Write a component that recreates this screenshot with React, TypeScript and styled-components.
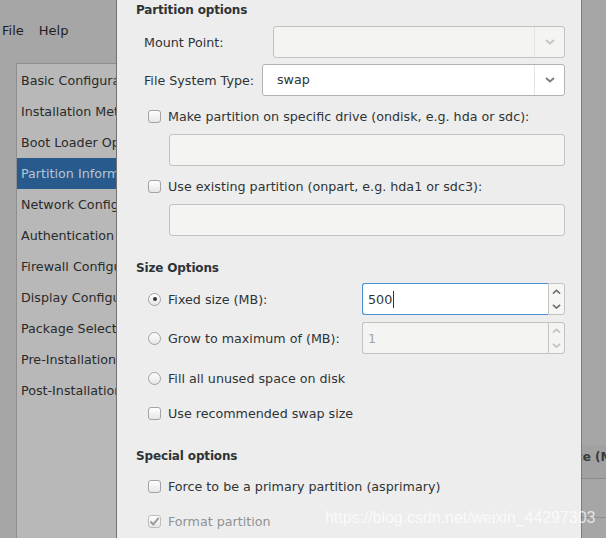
import * as React from 'react'
import styled, { createGlobalStyle } from 'styled-components'

const GlobalStyle = createGlobalStyle`
    html, body {
        margin: 0;
        padding: 0;
    }
    body {
        background: #a6a6a6;
        font-family: "DejaVu Sans", "Liberation Sans", sans-serif;
        font-size: 12.7px;
        color: #2e3436;
        overflow: hidden;
    }
`

const Screen = styled.div`
    position: relative;
    width: 606px;
    height: 538px;
    overflow: hidden;
    background: #a6a6a6;
`

// ---- main window behind the dialog ----

const MainWindow = styled.div`
    display: flex;
    flex-direction: column;
    height: 100%;
`

const MenuBar = styled.div`
    display: flex;
    gap: 15px;
    height: 63px;
    box-sizing: border-box;
    padding: 22px 0 0 2px;
    line-height: 18px;
    font-size: 13px;
    color: #1e1e1e;
`

const Body = styled.div`
    flex: 1;
    display: flex;
    padding-left: 16px;
`

const SideList = styled.div`
    flex: none;
    width: 99px;
    padding-top: 1px;
    overflow: hidden;
    background: #b8b8b8;
    border: 1px solid #8e8e8e;
    border-bottom: none;
`

const SideItem = styled.div<{ selected?: boolean }>`
    height: 31px;
    line-height: 31px;
    padding-left: 4px;
    white-space: nowrap;
    overflow: hidden;
    color: ${props => (props.selected ? '#b9c5d2' : '#2a2a2a')};
    background: ${props => (props.selected ? '#285a8d' : 'transparent')};
`

const ContentPane = styled.div`
    flex: 1;
    padding: 382px 0 0 12px;
`

const TableHeader = styled.div`
    display: grid;
    grid-template-columns: 200px 233px 1fr;
    height: 33px;
    line-height: 20px;
    border-bottom: 1px solid #8b8b8b;
    background: #a1a1a1;
    font-weight: bold;
    font-size: 12px;
    color: #3a3a3a;
`

const HeaderCell = styled.div`
    padding: 2px 1px;
    white-space: nowrap;
`

const TableRow = styled.div`
    height: 38px;
    border-bottom: 1px solid #909090;
`

// ---- dialog ----

const Dialog = styled.div`
    position: absolute;
    left: 116px;
    top: -10px;
    width: 466px;
    height: 580px;
    box-sizing: border-box;
    padding: 11px 16px 0 19px;
    background: #ededed;
    border-left: 1px solid #727272;
    border-right: 1px solid #7b7b7b;
    display: flex;
    flex-direction: column;
`

const Heading = styled.div<{ top: number }>`
    margin-top: ${props => props.top}px;
    height: 18px;
    line-height: 18px;
    font-weight: bold;
    font-size: 12px;
    letter-spacing: -0.15px;
    color: #2e3436;
`

const FieldRow = styled.div<{ top: number }>`
    margin-top: ${props => props.top}px;
    display: flex;
    align-items: center;
    height: 32px;
    padding-left: 8px;
`

const OptionRow = styled.div<{ top: number; tall?: boolean }>`
    margin-top: ${props => props.top}px;
    display: flex;
    align-items: center;
    height: ${props => (props.tall ? 32 : 20)}px;
    padding-left: 12px;
`

const FieldLabel = styled.div<{ width: number }>`
    flex: none;
    width: ${props => props.width}px;
    white-space: nowrap;
`

const OptionLabel = styled.div<{ width?: number; disabled?: boolean }>`
    flex: none;
    margin-left: 7px;
    width: ${props => (props.width ? `${props.width}px` : 'auto')};
    white-space: nowrap;
    color: ${props => (props.disabled ? '#8f9293' : '#2e3436')};
`

const Combo = styled.div<{ disabled?: boolean }>`
    flex: 1;
    display: flex;
    height: 32px;
    box-sizing: border-box;
    border: 1px solid ${props => (props.disabled ? '#c2c2bf' : '#b2b2ae')};
    border-radius: 3px;
    background: ${props => (props.disabled ? '#f4f4f2' : '#ffffff')};
`

const ComboValue = styled.div`
    flex: 1;
    padding-left: 14px;
    line-height: 30px;
`

const ComboButton = styled.div`
    flex: none;
    width: 29px;
    display: flex;
    align-items: center;
    justify-content: center;
    border-left: 1px solid #e4e4e1;
`

const Entry = styled.div<{ top: number }>`
    margin: ${props => props.top}px 0 0 33px;
    height: 32px;
    box-sizing: border-box;
    border: 1px solid #c2c2bf;
    border-radius: 3px;
    background: #f4f4f2;
`

const Spin = styled.div`
    flex: 1;
    display: flex;
    height: 32px;
`

const SpinEntry = styled.div<{ focused?: boolean }>`
    flex: 1;
    display: flex;
    align-items: center;
    box-sizing: border-box;
    padding-left: 5px;
    border: 1px solid ${props => (props.focused ? '#4a90d9' : '#c2c2bf')};
    border-right: none;
    border-radius: 3px 0 0 3px;
    background: ${props => (props.focused ? '#ffffff' : '#f4f4f2')};
    color: ${props => (props.focused ? '#2e3436' : '#a0a3a4')};
`

const Caret = styled.span`
    display: inline-block;
    width: 1px;
    height: 17px;
    margin-left: 1px;
    background: #2e3436;
`

const SpinButtons = styled.div<{ focused?: boolean }>`
    flex: none;
    width: 17px;
    display: flex;
    flex-direction: column;
    box-sizing: border-box;
    border: 1px solid #c2c2bf;
    border-radius: 0 3px 3px 0;
    background: ${props => (props.focused ? '#f6f6f5' : '#f4f4f2')};
`

const SpinHalf = styled.div`
    flex: 1;
    display: flex;
    align-items: center;
    justify-content: center;
`

const CheckBox = styled.div<{ disabled?: boolean }>`
    flex: none;
    width: 13px;
    height: 13px;
    box-sizing: border-box;
    border: 1px solid ${props => (props.disabled ? '#bdbdbd' : '#a3a3a3')};
    border-radius: 3px;
    background: linear-gradient(#ffffff, #e6e6e6);
    display: flex;
    align-items: center;
    justify-content: center;
`

const Radio = styled.div`
    flex: none;
    width: 13px;
    height: 13px;
    box-sizing: border-box;
    border: 1px solid #a3a3a3;
    border-radius: 50%;
    background: linear-gradient(#ffffff, #e6e6e6);
    display: flex;
    align-items: center;
    justify-content: center;
`

const RadioDot = styled.div`
    width: 4px;
    height: 4px;
    border-radius: 50%;
    background: #2e3436;
`

const Watermark = styled.div`
    position: absolute;
    left: 325px;
    top: 509px;
    font-family: "Liberation Sans", Arial, sans-serif;
    font-size: 16px;
    letter-spacing: -0.05px;
    color: rgba(255, 255, 255, 0.72);
    white-space: nowrap;
`

const Chevron = ({ up, color, size = 10 }: { up?: boolean; color: string; size?: number }) => (
    <svg width={size} height={size * 0.6} viewBox="0 0 10 6">
        <path
            d={up ? 'M1 5 L5 1.5 L9 5' : 'M1 1 L5 4.5 L9 1'}
            fill="none"
            stroke={color}
            strokeWidth="1.8"
        />
    </svg>
)

const CheckMark = () => (
    <svg width="11" height="11" viewBox="0 0 11 11">
        <path d="M1.5 5.5 L4.3 8.4 L9.6 1.8" fill="none" stroke="#9a9c9d" strokeWidth="2" />
    </svg>
)

const sideItems = [
    'Basic Configuration',
    'Installation Method',
    'Boot Loader Options',
    'Partition Information',
    'Network Configuration',
    'Authentication',
    'Firewall Configuration',
    'Display Configuration',
    'Package Selection',
    'Pre-Installation Script',
    'Post-Installation Script',
]

const SpinBox = ({ value, focused }: { value: string; focused?: boolean }) => (
    <Spin>
        <SpinEntry focused={focused}>
            {value}
            {focused && <Caret />}
        </SpinEntry>
        <SpinButtons focused={focused}>
            <SpinHalf>
                <Chevron up size={9} color={focused ? '#6c6c6c' : '#c0c0c0'} />
            </SpinHalf>
            <SpinHalf>
                <Chevron size={9} color={focused ? '#6c6c6c' : '#c0c0c0'} />
            </SpinHalf>
        </SpinButtons>
    </Spin>
)

const App: React.FunctionComponent = () => {
    return (
        <Screen>
            <GlobalStyle />
            <MainWindow>
                <MenuBar>
                    <span>File</span>
                    <span>Help</span>
                </MenuBar>
                <Body>
                    <SideList>
                        {sideItems.map(item => (
                            <SideItem key={item} selected={item === 'Partition Information'}>
                                {item}
                            </SideItem>
                        ))}
                    </SideList>
                    <ContentPane>
                        <TableHeader>
                            <HeaderCell>Device</HeaderCell>
                            <HeaderCell>Type</HeaderCell>
                            <HeaderCell>Size (MB)</HeaderCell>
                        </TableHeader>
                        <TableRow />
                    </ContentPane>
                </Body>
            </MainWindow>

            <Dialog>
                <Heading top={0}>Partition options</Heading>
                <FieldRow top={7}>
                    <FieldLabel width={129}>Mount Point:</FieldLabel>
                    <Combo disabled>
                        <ComboValue />
                        <ComboButton>
                            <Chevron color="#c4c4c4" />
                        </ComboButton>
                    </Combo>
                </FieldRow>
                <FieldRow top={6}>
                    <FieldLabel width={118}>File System Type:</FieldLabel>
                    <Combo>
                        <ComboValue>swap</ComboValue>
                        <ComboButton>
                            <Chevron color="#7c7c7c" />
                        </ComboButton>
                    </Combo>
                </FieldRow>
                <OptionRow top={10}>
                    <CheckBox />
                    <OptionLabel>Make partition on specific drive (ondisk, e.g. hda or sdc):</OptionLabel>
                </OptionRow>
                <Entry top={8} />
                <OptionRow top={10}>
                    <CheckBox />
                    <OptionLabel>Use existing partition (onpart, e.g. hda1 or sdc3):</OptionLabel>
                </OptionRow>
                <Entry top={8} />

                <Heading top={23}>Size Options</Heading>
                <OptionRow top={6} tall>
                    <Radio>
                        <RadioDot />
                    </Radio>
                    <OptionLabel width={194}>Fixed size (MB):</OptionLabel>
                    <SpinBox value="500" focused />
                </OptionRow>
                <OptionRow top={7} tall>
                    <Radio />
                    <OptionLabel width={194}>Grow to maximum of (MB):</OptionLabel>
                    <SpinBox value="1" />
                </OptionRow>
                <OptionRow top={14}>
                    <Radio />
                    <OptionLabel>Fill all unused space on disk</OptionLabel>
                </OptionRow>
                <OptionRow top={15}>
                    <CheckBox />
                    <OptionLabel>Use recommended swap size</OptionLabel>
                </OptionRow>

                <Heading top={24}>Special options</Heading>
                <OptionRow top={11}>
                    <CheckBox />
                    <OptionLabel>Force to be a primary partition (asprimary)</OptionLabel>
                </OptionRow>
                <OptionRow top={15}>
                    <CheckBox disabled>
                        <CheckMark />
                    </CheckBox>
                    <OptionLabel disabled>Format partition</OptionLabel>
                </OptionRow>
            </Dialog>

            <Watermark>https://blog.csdn.net/weixin_44297303</Watermark>
        </Screen>
    )
}

export default App
